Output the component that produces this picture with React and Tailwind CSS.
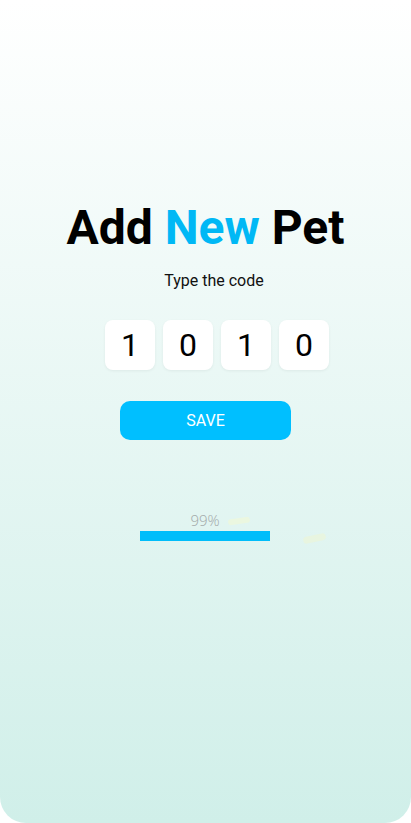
import { useState } from 'react';

const App = () => {
    const [code] = useState(['1', '0', '1', '0']);

    return (
        <div className="w-[411px] h-[823px] bg-white font-['Roboto',sans-serif]">
            <div className="relative w-full h-full rounded-b-[26px] bg-gradient-to-b from-white to-[#d0efe9] flex flex-col items-center">
                <h1 className="mt-[196px] text-[48px] leading-[64px] font-bold text-black">
                    Add <span className="text-[#00b8f5]">New</span> Pet
                </h1>
                <p className="mt-[10px] ml-[17px] text-[16px] leading-[22px] text-[#111]">Type the code</p>

                <div className="mt-[28px] flex gap-[8px] ml-[23px]">
                    {code.map((d, i) => (
                        <div key={i} className="w-[50px] h-[50px] bg-white rounded-[8px] shadow-[0_1px_3px_rgba(0,0,0,0.06)] flex items-center justify-center text-[32px] text-black">
                            {d}
                        </div>
                    ))}
                </div>

                <button className="mt-[31px] w-[171px] h-[39px] rounded-[10px] bg-[#00bfff] text-white text-[16px] flex items-center justify-center">
                    SAVE
                </button>

                {/* progress */}
                <div className="relative mt-[70px] -ml-[1px] w-[130px] flex flex-col items-center">
                    <span className="font-['Open_Sans',sans-serif] font-light text-[15px] leading-[21px] text-[#a3a9a9]">99%</span>
                    <div className="w-full h-[10px] bg-[#00bdfa]" />
                    <div className="absolute left-[88px] top-[8px] w-[22px] h-[6px] bg-[#eef7dc] opacity-80 rotate-[-8deg] rounded-sm" />
                    <div className="absolute left-[163px] top-[25px] w-[23px] h-[7px] bg-[#eaf5dc] opacity-80 rotate-[-12deg] rounded-sm" />
                </div>
            </div>
        </div>
    );
};

export default App;
